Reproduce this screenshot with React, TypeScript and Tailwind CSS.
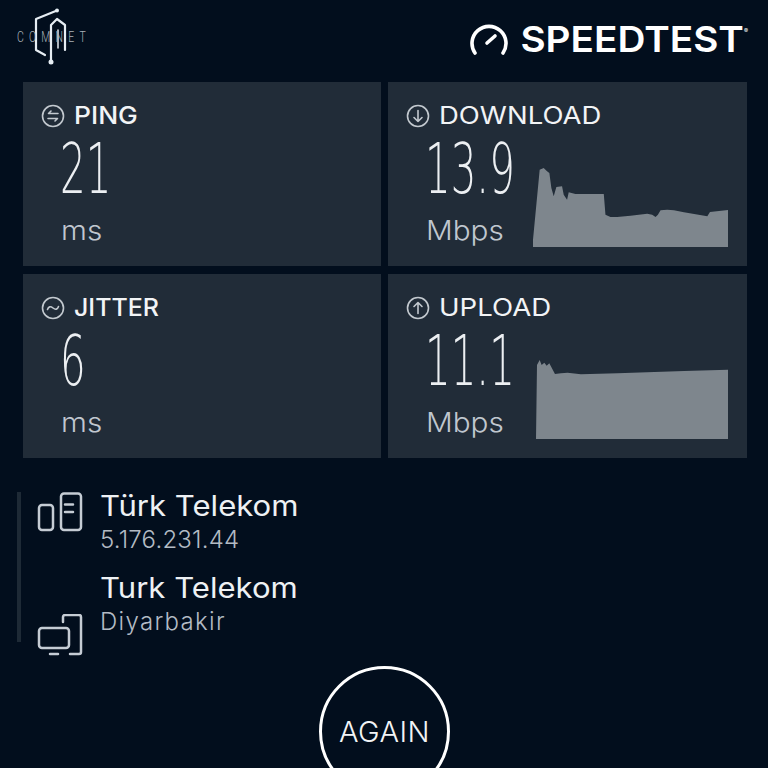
import React from 'react';

const sans = "font-['Inter',sans-serif]";

const downloadPoints =
  '448,742 448,720 468,510 480,505 490,515 497,520 503,565 510,590 518,562 535,560 540,585 550,600 555,578 575,583 660,583 665,645 680,652 700,652 740,648 790,642 805,645 815,652 822,645 830,632 850,630 870,632 900,638 970,650 978,637 1032,631 1032,742';
const uploadPoints =
  '455,507 458,285 466,270 472,285 480,278 487,287 495,280 512,312 530,310 550,308 590,313 700,310 900,303 1032,299 1032,507';

const RoundIcon: React.FC<{ children: React.ReactNode }> = ({ children }) => (
  <svg viewBox="0 0 24 24" className="w-[24px] h-[24px] shrink-0" fill="none" stroke="#c3c9cf" strokeWidth="1.6" strokeLinecap="round" strokeLinejoin="round">
    <circle cx="12" cy="12" r="10.5" />
    {children}
  </svg>
);

const PingIcon = () => (
  <RoundIcon>
    <path d="M17 9.5H7.5L10 7" />
    <path d="M7 14.5h9.5L14 17" />
  </RoundIcon>
);
const JitterIcon = () => (
  <RoundIcon>
    <path d="M6.5 13.5c1-3 3-3.5 5.500-1.500s4.500 1.500 5.500-1.500" />
  </RoundIcon>
);
const DownloadIcon = () => (
  <RoundIcon>
    <path d="M12 6.500v11M8 13.500l4 4 4-4" />
  </RoundIcon>
);
const UploadIcon = () => (
  <RoundIcon>
    <path d="M12 17.500v-11M8 10.500l4-4 4 4" />
  </RoundIcon>
);

interface CardProps {
  icon: React.ReactNode;
  label: string;
  labelClass: string;
  value: string;
  unit: string;
  chart?: React.ReactNode;
}

const Card: React.FC<CardProps> = ({ icon, label, labelClass, value, unit, chart }) => (
  <div className="h-[184px] bg-[#212c38] pl-[18px] pt-[22px] flex flex-col">
    <div className="flex items-center gap-[9px] h-[24px] shrink-0">
      {icon}
      <span className={`${sans} text-[24px] leading-[24px] text-[#f2f4f6] origin-left ${labelClass}`}>{label}</span>
    </div>
    <div className="flex">
      <div className="w-[106px] pl-[20px] shrink-0">
        <div className="h-[66px] mt-[8px] -ml-[1px] text-[69px] leading-[66px] font-['DejaVu_Sans',sans-serif] font-extralight text-[#eceff2] origin-left scale-x-[0.585] whitespace-nowrap">
          {value}
        </div>
        <div className={`${sans} text-[27px] leading-[32px] mt-[13px] text-[#c0c7cf] font-light origin-left scale-x-[1.1]`}>{unit}</div>
      </div>
      {chart}
    </div>
  </div>
);

const Chart: React.FC<{ points: string; viewBox: string; className: string }> = ({ points, viewBox, className }) => (
  <svg viewBox={viewBox} preserveAspectRatio="none" className={className}>
    <polygon points={points} fill="#7e868d" />
  </svg>
);

const ComnetLogo = () => (
  <div className="relative w-[110px] h-[70px]">
    <svg viewBox="0 0 110 70" className="w-[110px] h-[70px]" fill="none" stroke="#e6edf3" strokeWidth="2.200" strokeLinecap="round" strokeLinejoin="round">
      <path d="M57 10.500 36 19v31l9 5" />
      <path d="M51 62V25l6-6 8 6v25" />
      <path d="M58 30v18" strokeWidth="1.500" />
      <circle cx="57" cy="10.500" r="2" fill="#e6edf3" stroke="none" />
      <circle cx="51" cy="62" r="2.500" fill="#e6edf3" stroke="none" />
    </svg>
    <span className="absolute left-[17px] top-[29px] font-['Roboto',sans-serif] text-[15px] leading-[16px] font-light text-[#aab2ba] tracking-[7.400px] origin-left scale-x-[0.7]">COMNET</span>
  </div>
);

const SpeedtestLogo = () => (
  <div className="flex items-center gap-[28px]">
    <svg viewBox="0 0 38 32" className="w-[38px] h-[32px]" fill="none" stroke="#fff" strokeWidth="3.600" strokeLinecap="round">
      <path d="M5 30A17 17 0 1 1 33 30" />
      <path d="M17 20l8-7" />
    </svg>
    <div className="flex items-start">
      <span className={`${sans} text-[36px] leading-[36px] font-semibold text-white origin-right scale-x-[1.075]`}>SPEEDTEST</span>
      <span className={`${sans} text-[6px] leading-[8px] text-white mt-[6px]`}>®</span>
    </div>
  </div>
);

const ServerIcon = () => (
  <svg viewBox="0 0 46 40" className="w-[46px] h-[40px]" fill="none" stroke="#c5ccd4" strokeWidth="2.500" strokeLinecap="round" strokeLinejoin="round">
    <rect x="2" y="13" width="14" height="25" rx="3" />
    <rect x="24" y="1.500" width="20" height="36.500" rx="3" />
    <path d="M28 12.500h8M28 20h8" />
  </svg>
);

const DeviceIcon = () => (
  <svg viewBox="0 0 46 42" className="w-[46px] h-[42px]" fill="none" stroke="#c5ccd4" strokeWidth="2.500" strokeLinecap="round" strokeLinejoin="round">
    <rect x="2" y="14" width="30" height="20" rx="3" />
    <path d="M26 8V3a2 2 0 0 1 2-2h14a2 2 0 0 1 2 2v35a2 2 0 0 1-2 2h-9" />
    <path d="M13 40h8" />
  </svg>
);

const InfoRow: React.FC<{ title: string; sub: string; subClass: string }> = ({ title, sub, subClass }) => (
  <div>
    <div className={`${sans} text-[28px] leading-[32px] text-[#eef1f4] origin-left scale-x-[1.11]`}>{title}</div>
    <div className={`${sans} text-[24px] leading-[30px] mt-[3px] font-light text-[#b3bbc4] ${subClass}`}>{sub}</div>
  </div>
);

export default function App() {
  return (
    <div className="w-[768px] h-[768px] overflow-hidden bg-[#020e1d] flex flex-col">
      <div className="h-[82px] shrink-0 flex justify-between pr-[20px]">
        <ComnetLogo />
        <div className="pt-[21px]">
          <SpeedtestLogo />
        </div>
      </div>

      <div className="grid shrink-0 grid-cols-[358px_359px] gap-x-[7px] gap-y-[8px] pl-[23px]">
        <Card icon={<PingIcon />} label="PING" labelClass="font-medium scale-x-[1.1]" value="21" unit="ms" />
        <Card
          icon={<DownloadIcon />}
          label="DOWNLOAD"
          labelClass="font-normal scale-x-[1.145]"
          value="13.9"
          unit="Mbps"
          chart={<Chart points={downloadPoints} viewBox="448 505 584 237" className="w-[195px] h-[79px] mt-[40px] ml-[21px]" />}
        />
        <Card icon={<JitterIcon />} label="JITTER" labelClass="font-medium scale-x-[1.04]" value="6" unit="ms" />
        <Card
          icon={<UploadIcon />}
          label="UPLOAD"
          labelClass="font-normal scale-x-[1.15]"
          value="11.1"
          unit="Mbps"
          chart={<Chart points={uploadPoints} viewBox="455 270 577 237" className="w-[192px] h-[79px] mt-[40px] ml-[24px]" />}
        />
      </div>

      <div className="flex shrink-0 mt-[34px] pl-[17px]">
        <div className="w-[4px] h-[150px] bg-[#1e2a36]" />
        <div className="w-[46px] ml-[16px] h-[164px] flex flex-col justify-between">
          <ServerIcon />
          <DeviceIcon />
        </div>
        <div className="ml-[17px] -mt-[2px] flex flex-col gap-[17px]">
          <InfoRow title="Türk Telekom" sub="5.176.231.44" subClass="tracking-[0.2px]" />
          <InfoRow title="Turk Telekom" sub="Diyarbakir" subClass="tracking-[1.300px]" />
        </div>
      </div>

      <div className="flex justify-center mt-[10px] pl-[1px]">
        <div className="w-[131px] h-[131px] shrink-0 rounded-full border-[3px] border-white flex items-center justify-center">
          <span className={`${sans} text-[29px] font-light text-[#f2f4f6] tracking-[0.5px]`}>AGAIN</span>
        </div>
      </div>
    </div>
  );
}
